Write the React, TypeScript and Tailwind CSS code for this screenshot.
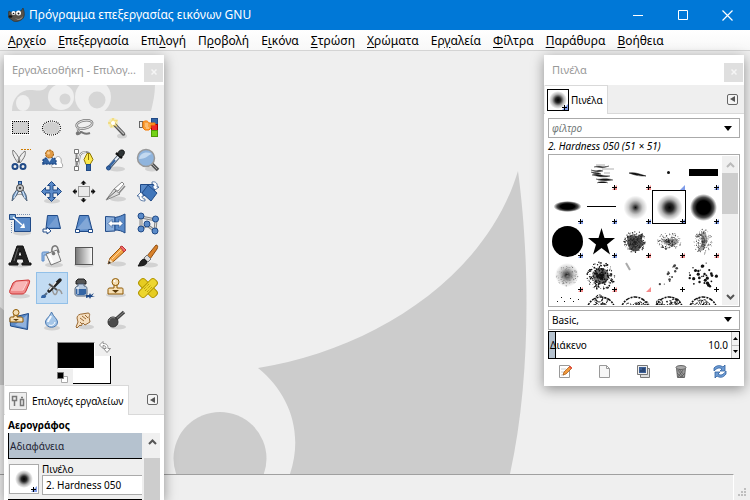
import type { ReactNode } from "react";

const BLUE = "#5b8bc9";
const NAVY = "#204a87";

function Icon({ children, size = 24 }: { children: ReactNode; size?: number }) {
  return (
    <svg width={size} height={size} viewBox={`0 0 ${size} ${size}`} fill="none" aria-hidden="true">
      {children}
    </svg>
  );
}

function Shade({ cx = 12, cy = 20, rx = 10 }: { cx?: number; cy?: number; rx?: number }) {
  return <ellipse cx={cx} cy={cy} rx={rx} ry="2.5" fill="#000" opacity="0.12" />;
}

const tools: { name: string; art: ReactNode }[] = [
  {
    name: "Ορθογώνια επιλογή",
    art: (
      <g shapeRendering="crispEdges">
        <rect x="3" y="4" width="19" height="15" fill="#fff" />
        <rect x="4" y="5" width="17" height="13" fill="#d0d0d0" />
        <path d="M4 5.500h17M4 17.500h17M4.500 5v13M20.500 5v13" stroke="#000" strokeDasharray="1 1" />
      </g>
    ),
  },
  {
    name: "Ελλειπτική επιλογή",
    art: (
      <>
        <ellipse cx="11.500" cy="12" rx="9" ry="7" fill="#d0d0d0" stroke="#fff" strokeWidth="2" />
        <ellipse cx="11.500" cy="12" rx="9" ry="7" stroke="#000" strokeWidth="1.200" strokeDasharray="1 1" />
      </>
    ),
  },
  {
    name: "Ελεύθερη επιλογή",
    art: (
      <>
        <ellipse cx="12.500" cy="8.500" rx="8" ry="4" transform="rotate(-12 12 9)" stroke="#777" strokeWidth="2.500" />
        <ellipse cx="12.500" cy="8.500" rx="8" ry="4" transform="rotate(-12 12 9)" stroke="#ddd" />
        <path d="M6 12c-1 3 1 3 2 4s-2 3-3 2 1-3 4-2 4 3 9 1" stroke="#777" strokeWidth="2" />
        <path d="M6 12c-1 3 1 3 2 4" stroke="#ddd" />
      </>
    ),
  },
  {
    name: "Ασαφής επιλογή",
    art: (
      <>
        <Shade cx={18} rx={5} />
        <circle cx="9" cy="7" r="5" fill="#fce94f" opacity="0.35" />
        <path d="m11 9 8.500 9" stroke="#555" strokeWidth="3.500" strokeLinecap="round" />
        <path d="m12 10 8 8" stroke="#bbb" strokeWidth="1.200" />
        <path d="m9 2 1.300 3 3.200-1-2.500 3 2 3.500-3.500-1.500-2.500 2.500.5-3.500L4 7l3.500-1z" fill="#fff3a8" stroke="#efcb5a" strokeWidth=".6" />
        <circle cx="9" cy="7" r="2" fill="#fff" />
      </>
    ),
  },
  {
    name: "Επιλογή κατά χρώμα",
    art: (
      <>
        <rect x="15.500" y="2.500" width="6" height="6" fill="#3465a4" stroke={NAVY} />
        <rect x="15.500" y="8.500" width="6" height="6" fill="#ef2929" stroke="#a40000" />
        <rect x="15.500" y="14.500" width="6" height="6" fill="#73d216" stroke="#4e9a06" />
        <rect x="3.500" y="5.500" width="3" height="6" fill="#eee" stroke="#666" />
        <path d="M7 6c3-2 5-1 6 1h6v2h-4v3l-2 2H9l-2-2z" fill="#f9a13e" stroke="#f57900" />
        <path d="M9 8h3M9 10h3M10 12h3" stroke="#ffd9a8" />
      </>
    ),
  },
  {
    name: "Έξυπνο ψαλίδι",
    art: (
      <>
        <path d="M13 1.500h10" stroke="#ce7b00" strokeWidth="1.200" strokeDasharray="2 1" />
        <path d="M5 2c-1 3 0 6 5 13l2-3C10 8 8 5 5 2zM17 3c1 3 0 6-5 12l-2-3c2-4 4-7 7-9z" fill="#eee" stroke="#777" />
        <rect x="4.500" y="16" width="5" height="5" rx="2.500" stroke={NAVY} strokeWidth="2" />
        <rect x="12.500" y="16" width="5" height="5" rx="2.500" stroke={NAVY} strokeWidth="2" />
        <circle cx="11" cy="13.500" r="1" fill="#555" />
      </>
    ),
  },
  {
    name: "Επιλογή προσκηνίου",
    art: (
      <>
        <path d="M12 19.500c-1-3 1-5 3-5 0-4 1-6 3-6s4 2 3 6c2 1 2 4 1 5z" fill="#fff" stroke="#aaa" />
        <path d="M3 16v-3c0-2 2-3 4-3h5c3 0 4 2 4 4v2z" fill="#3465a4" stroke={NAVY} strokeWidth="1.500" strokeDasharray="2 1" />
        <path d="m7 10 2.500 4 2.500-4" fill="#dbe7f5" />
        <circle cx="9.500" cy="6" r="4" fill="#e09a45" stroke="#a15e0d" strokeDasharray="2 1" />
        <circle cx="8.500" cy="5" r="1.500" fill="#f6c98d" />
      </>
    ),
  },
  {
    name: "Διαδρομές",
    art: (
      <>
        <path d="M4.500 5v14M5 19c4-4-1-15 9-15 3 0 4 2 4 5" stroke="#888" strokeWidth="2" />
        <path d="M5 19c4-4-1-15 9-15" stroke="#eee" />
        <path d="M2.500 1.500h4v4h-4zM2.500 18.500h4v4h-4zM3.500 10.500h3v3h-3z" fill="#fff" stroke="#777" />
        <path d="M15 5.500h3l3 6-3 5h-4l-2-5z" fill="#fce94f" stroke="#8f7700" />
        <path d="M16.500 6v6" stroke="#8f7700" />
        <rect x="14.500" y="16.500" width="4" height="6" fill="#3465a4" stroke={NAVY} />
      </>
    ),
  },
  {
    name: "Επιλογή χρώματος",
    art: (
      <>
        <Shade cx={13} cy={21} rx={8} />
        <path d="M15 8 5.500 19" stroke="#4a5a6e" strokeWidth="4" strokeLinecap="round" />
        <path d="M15 8 6 18" stroke="#e8f1fa" strokeWidth="2" />
        <path d="m11 12-6 7" stroke="#3465a4" strokeWidth="2" />
        <circle cx="4.500" cy="20" r="2" fill="#3465a4" stroke={NAVY} />
        <path d="m12 5 6 5" stroke="#111" strokeWidth="2.500" />
        <path d="M14 7c0-4 2-5 4-5s3 2 2 4-2 3-4 3z" fill="#2e3436" stroke="#111" />
      </>
    ),
  },
  {
    name: "Εστίαση",
    art: (
      <>
        <Shade cx={16} cy={21} rx={7} />
        <path d="m16 16 6 6" stroke="#555" strokeWidth="3.500" />
        <path d="m16 16 5 5" stroke="#aaa" />
        <circle cx="10" cy="10" r="8.500" fill="#8fb4dd" stroke="#999" strokeWidth="1.500" />
        <path d="M3 11c1-6 7-8 13-5-3 0-5 5-13 5z" fill="#c3d9f0" />
      </>
    ),
  },
  {
    name: "Μέτρηση",
    art: (
      <>
        <path d="M5 18c3-5 11-5 14 0" stroke="#999" />
        <path d="m10 8-5 7-1 6 4-5 4-7zM14 8l4 7 1 6-4-5-3-7z" fill="#729fcf" stroke="#54657a" />
        <path d="m10 9-4 9M14 9l3 9" stroke="#dbe7f5" />
        <rect x="10.500" y="1.500" width="3" height="4" fill="#729fcf" stroke={NAVY} />
        <circle cx="12" cy="8" r="3.500" fill="#ccc" stroke="#444" />
        <circle cx="12" cy="8" r="1.300" fill="#444" />
      </>
    ),
  },
  {
    name: "Μετακίνηση",
    art: (
      <>
        <Shade cx={12} cy={21} rx={8} />
        <path
          d="m11.500 1.500 4 4h-2.500v4.500h4.500V7.500l4 4-4 4V13H13v4.500h2.500l-4 4-4-4H10V13H5.500v2.500l-4-4 4-4V10H10V5.500H7.500z"
          fill={BLUE}
          stroke={NAVY}
        />
      </>
    ),
  },
  {
    name: "Στοίχιση",
    art: (
      <>
        <rect x="6.500" y="6.500" width="11" height="10" fill="#eaeaea" stroke="#999" />
        <path
          d="m11.500 0.500 3 3h-2V5h-2V3.500h-2zM11.500 22.500l3-3h-2V18h-2v1.500h-2zM.5 11.500l3-3v2H5v2H3.500v2zM23.500 11.500l-3-3v2H19v2h1.500v2z"
          fill="#111"
        />
      </>
    ),
  },
  {
    name: "Περικοπή",
    art: (
      <>
        <Shade cx={14} cy={19} rx={8} />
        <path d="M2 20 10 9l6 5z" fill="#ddd" stroke="#888" />
        <path d="m10 9 8-7 2 2-6 7z" fill="#fff" stroke="#888" />
        <path d="m15 13 6-7" stroke="#888" strokeWidth="1.500" />
        <path d="m3 19 9-8" stroke="#666" />
      </>
    ),
  },
  {
    name: "Περιστροφή",
    art: (
      <>
        <path d="M4.500 4.500h14v11h-14z" fill={BLUE} stroke={NAVY} />
        <path d="m12 5 9 8-6 8-9-8z" fill="#4176ba" stroke={NAVY} />
        <path d="M16 2c4-1 6 2 5 5h2l-4 3-3-4h2c0-2-1-2-2-2zM9 21c-5 0-6-2-6-5H1l4-4 3 4H6c0 2 1 3 3 3z" fill="#fff" stroke={NAVY} strokeWidth=".7" />
      </>
    ),
  },
  {
    name: "Κλιμάκωση",
    art: (
      <>
        <Shade cx={14} cy={21} rx={9} />
        <path d="M6.500 5.500h16v14h-16z" fill={BLUE} stroke={NAVY} />
        <path d="M1.500 2.500h6v5h-6z" fill="#729fcf" stroke={NAVY} />
        <path d="M9 2.500h13M3.500 10v11" stroke="#7c93b3" strokeDasharray="1 1" />
        <path d="m5 5 9 8" stroke="#fff" strokeWidth="1.500" />
        <path d="M17 16h-5l4-5z" fill="#fff" />
      </>
    ),
  },
  {
    name: "Στρέβλωση",
    art: (
      <>
        <path d="M7.500 3.500h10l3 13H6z" fill={BLUE} stroke={NAVY} />
        <path d="m8 15 9-11 2 11z" fill="#8fb0dc" opacity=".5" />
        <path d="M3 17h4v-2l4 4-4 3v-2H3z" fill="#fff" stroke={NAVY} />
      </>
    ),
  },
  {
    name: "Προοπτική",
    art: (
      <>
        <path d="M7.500 3.500h9l4 16h-17z" fill={BLUE} stroke={NAVY} />
        <path d="m4 18 11-13 4 12z" fill="#a9c3e6" opacity=".5" />
        <path d="M3.500 17.500h4v3h-4zM16.500 17.500h4v3h-4z" fill="#fff" stroke={NAVY} />
      </>
    ),
  },
  {
    name: "Αναστροφή",
    art: (
      <>
        <path d="M1.500 4.500 11 5v14l-9.500.5z" fill="#8db0dc" stroke={NAVY} />
        <path d="M11 5.500c5-1 7-2 10-3.500v19c-3-2-6-3-10-3z" fill={BLUE} stroke={NAVY} />
        <path d="m4 11.500 4-4v2.500h7V7.500l4 4-4 4V13H8v2.500z" fill="#fff" stroke={NAVY} strokeWidth=".6" />
      </>
    ),
  },
  {
    name: "Κλωβός",
    art: (
      <>
        <path d="m5 5 15 3-1 11-8-6-6 4z" stroke="#888" strokeWidth="3" />
        <path d="m5 5 15 3-1 11-8-6-6 4z" stroke="#ddd" />
        {[[5, 4], [19.5, 7], [11, 12], [5, 17], [19, 19]].map(([x, y]) => (
          <circle key={`${x}-${y}`} cx={x} cy={y} r="3" fill={BLUE} stroke={NAVY} />
        ))}
      </>
    ),
  },
  {
    name: "Κείμενο",
    art: (
      <>
        <Shade cy={21} />
        <path
          d="M9 2h6l6 17h2v2h-9v-2h2l-1-4H9l-1 4h2v2H1v-2h2zM12 6l-2 6h4z"
          fill="#222"
          fillRule="evenodd"
          stroke="#111"
        />
        <path d="m10 4-4 13" stroke="#666" />
      </>
    ),
  },
  {
    name: "Γέμισμα με κουβά",
    art: (
      <>
        <Shade cx={14} cy={21} rx={9} />
        <path d="M2 17V9c0-1 1-1 3-1h4v3H4v6z" fill="#9bbce3" stroke={BLUE} />
        <path d="m6 10 11-4 4 11-10 4z" fill="#f3f3f3" stroke="#777" />
        <path d="M12 8c-1-7 5-8 6-3l1 4" stroke="#777" strokeWidth="1.500" />
        <circle cx="13.500" cy="9.500" r="1.800" fill="#777" />
        <path d="m9 11 4 8" stroke="#fff" strokeWidth="2" />
      </>
    ),
  },
  {
    name: "Διαβάθμιση",
    art: (
      <>
        <defs>
          <linearGradient id="tool-gradient">
            <stop stopColor="#777" />
            <stop offset="1" stopColor="#fff" />
          </linearGradient>
        </defs>
        <Shade cy={21} />
        <rect x="3.500" y="3.500" width="17" height="17" fill="url(#tool-gradient)" stroke="#555" />
      </>
    ),
  },
  {
    name: "Μολύβι",
    art: (
      <>
        <Shade cx={14} cy={20} rx={8} />
        <path d="m4 20 2-6L17 3l4 4L10 17z" fill="#f0a346" stroke="#99540c" />
        <path d="m8 15 10-10" stroke="#ffd79b" />
        <path d="m16 3 2-1 4 4-2 2z" fill="#ef6b6b" stroke="#b33" />
        <path d="m4 20 2-5 3 3z" fill="#f7e1bd" />
        <path d="m4 20 1-3 2 2z" fill="#222" />
      </>
    ),
  },
  {
    name: "Πινέλο",
    art: (
      <>
        <Shade cx={14} cy={21} rx={8} />
        <path d="M20 1c2 0 2 2 1 4l-7 10-3-3z" fill="#d9822b" stroke="#8f4e12" />
        <path d="m11 11 4 4-3 3-4-4z" fill="#ddd" stroke="#777" />
        <path d="M2 22c2-2 2-6 6-7l3 3c-1 4-6 4-9 4z" fill="#222" stroke="#111" />
      </>
    ),
  },
  {
    name: "Γόμα",
    art: (
      <>
        <Shade cy={20} />
        <path d="m8 5 12-1c2 0 2 1 1 4l-3 7c-1 2-2 3-4 3H4c-2 0-3-2-2-4l3-7z" fill="#f08b8b" stroke="#c33" />
        <path d="m8 6 11-1-4 8H4z" fill="#f8b5b5" />
        <path d="M3 14h12l4-8" stroke="#fdd" />
      </>
    ),
  },
  {
    name: "Αερογράφος",
    art: (
      <>
        <path d="M12 11c1 9 4 9 5 5s4-2 5 2" stroke="#999" strokeWidth="1.500" />
        <path d="m20 4-11 11" stroke="#222" strokeWidth="3.500" strokeLinecap="round" />
        <path d="m16 6-7 8" stroke="#eee" strokeWidth="1.500" />
        <path d="m9 8 8 6" stroke="#555" strokeWidth="2" />
        <path d="m7 17-3 3" stroke="#5c6f84" strokeWidth="2" />
        <path d="M1 22c0-3 2-4 4-3s1 2 0 3z" fill="#3465a4" />
      </>
    ),
  },
  {
    name: "Μελάνι",
    art: (
      <>
        <path d="M6 3h6l2 2v3H4V5z" fill="#555" stroke="#222" />
        <path d="M6 8h6v2c3 0 3 2 3 4v4c0 1-1 2-2 2H5c-1 0-2-1-2-2v-5c0-1 1-3 3-3z" fill="#b9cbe0" stroke="#54657a" />
        <path d="M4 13h10v5l-2 1H6l-2-1z" fill="#3465a4" />
        <path d="M6 11v7" stroke="#fff" />
        <path d="m14 19 3 0 1-2 1 2 3-2-2 3 3 1-4 0-1 2-1-2-3 1z" fill={NAVY} />
      </>
    ),
  },
  {
    name: "Κλωνοποίηση",
    art: (
      <>
        <Shade cy={19} />
        <path d="M10 9h3v3h5c1 0 1 1 1 2v4H4v-4c0-1 0-2 2-2h4z" fill="#f6dfb5" stroke="#8f5902" />
        <circle cx="11.500" cy="6" r="3.500" fill="#f6dfb5" stroke="#8f5902" />
        <path d="m8 14 3.500 3 3.500-3z" fill="#5c3b08" />
        <circle cx="10.500" cy="5" r="1" fill="#fff" />
      </>
    ),
  },
  {
    name: "Θεραπεία",
    art: (
      <>
        <g stroke="#b39700">
          <rect x="1" y="8" width="22" height="8" rx="3" transform="rotate(45 12 12)" fill="#e6cc22" />
          <rect x="1" y="8" width="22" height="8" rx="3" transform="rotate(-45 12 12)" fill="#edd62f" />
        </g>
        <path d="m8 13 5-5M9 15l6-6M11 16l5-5" stroke="#a98d00" strokeDasharray="1 1" />
      </>
    ),
  },
  {
    name: "Κλωνοποίηση προοπτικής",
    art: (
      <>
        <path d="M2 10 20.500 5.500l-1 16L2.500 18z" fill={BLUE} stroke={NAVY} />
        <path d="m7 17 12-10-1 13z" fill="#a9c3e6" opacity=".7" />
        <path d="M6 6h3v3h4c1 0 2 1 2 2v3H2v-3c0-1 0-2 1-2h3z" fill="#f6dfb5" stroke="#8f5902" />
        <circle cx="8" cy="4.500" r="3" fill="#f6dfb5" stroke="#8f5902" />
        <path d="m5 11 3 2 3-2z" fill="#5c3b08" />
      </>
    ),
  },
  {
    name: "Θόλωση",
    art: (
      <>
        <Shade cy={20} rx={8} />
        <path d="M11.500 4c2 5 6 7 6 10 0 7-12 7-12 0 0-3 4-5 6-10z" fill="#a5c6e8" stroke="#4a78b0" />
        <path d="M11 8c-1 3-3 4-3 6" stroke="#f4f9ff" strokeWidth="2" />
        <path d="M9 17c3 1 5 0 6-3" stroke="#fff" />
      </>
    ),
  },
  {
    name: "Μουτζούρα",
    art: (
      <>
        <Shade cx={14} cy={19} rx={8} />
        <path d="M5 10c0-3 3-4 5-4l6-1c2 0 2 2 1 4l1 5-5 3-2-2-2 3-1-1-3 3-1-1 2-5z" fill="#f6dfc0" stroke="#9a6a35" />
        <path d="m8 10 4 3M10 8l4 3M8 14l2 2M13 7l3 3" stroke="#9a6a35" />
      </>
    ),
  },
  {
    name: "Σκίαση / Φωτισμός",
    art: (
      <>
        <Shade cx={14} cy={19} rx={8} />
        <path d="m11 12 9-8" stroke="#444" strokeWidth="3.500" />
        <path d="m11 12 9-8" stroke="#888" />
        <circle cx="9" cy="14" r="5" fill="#4a4a4a" stroke="#333" />
        <path d="M5 13c1-3 3-4 6-3" stroke="#888" />
      </>
    ),
  },
];

// Deterministic spatter so that the brush previews look the same on every render.
function spatter(seed: number, count: number, spread: number, size: number) {
  let s = seed * 7919 + 17;
  const next = () => {
    s = (s * 16807) % 2147483647;
    return s / 2147483647;
  };
  for (let i = 0; i < 5; i++) next();
  return Array.from({ length: count }, () => {
    const a = next() * Math.PI * 2;
    const r = Math.pow(next(), 0.8) * spread;
    return { x: 17 + Math.cos(a) * r, y: 18 + Math.sin(a) * r, r: size * (0.5 + next()) };
  });
}

function Spatter(p: { seed: number; count: number; spread: number; size: number; color?: string }) {
  return (
    <>
      {spatter(p.seed, p.count, p.spread, p.size).map((d, i) => (
        <circle key={i} cx={d.x} cy={d.y} r={d.r} fill={p.color ?? "#111"} />
      ))}
    </>
  );
}

function Cells({ seed }: { seed: number }) {
  return (
    <>
      {spatter(seed, 26, 14, 2.4).map((d, i) => (
        <circle key={i} cx={d.x} cy={d.y + 1} r={d.r} stroke="#111" strokeDasharray="3 1" />
      ))}
      <circle cx="17" cy="19" r="14" stroke="#111" strokeWidth="1.500" strokeDasharray="4 1 2 1" />
    </>
  );
}

type Mark = "red" | "blue" | "plain" | "redTri" | "blueTri" | "none";

const brushes: { name: string; mark: Mark; art: ReactNode }[] = [
  { name: "Clipboard", mark: "none", art: null },
  {
    name: "Acrylic 01",
    mark: "red",
    art: (
      <path
        d="M10 11c6-2 8 1 15-1-7 3-9 1-15 1zM7 14c6 2 8-1 12 1-5 1-8 1-12-1zM8 19c5-2 9 1 18 1-8 2-12 0-18-1zM12 23c4 1 8-2 17 1-7 1-12 1-17-1zM7 16c5 1 7 0 10 2-4 0-7 0-10-2zM13 27c5-2 8-1 11 0M12 9h9M18 13h12M20 17h6M14 25h9"
        fill="#111"
        stroke="#333"
        strokeWidth=".4"
      />
    ),
  },
  { name: "Acrylic 02", mark: "red", art: <path d="M11 17c6-1 10 1 17 3-5 0-9 0-17-3z" fill="#111" stroke="#111" strokeWidth=".5" /> },
  { name: "Pixel", mark: "blueTri", art: <circle cx="16.500" cy="16.500" r="1.500" fill="#111" /> },
  { name: "Block 01", mark: "blue", art: <rect x="3" y="13" width="29" height="7" fill="#000" /> },
  { name: "Ellipse", mark: "blue", art: <ellipse cx="17.500" cy="16.500" rx="14" ry="5.500" fill="url(#brush-hard)" /> },
  { name: "Line", mark: "blue", art: <path d="M3 16.500h29" stroke="#000" /> },
  { name: "Hardness 025", mark: "blue", art: <circle cx="17.500" cy="17.500" r="12" fill="url(#brush-soft)" /> },
  { name: "Hardness 050", mark: "blue", art: <circle cx="17.500" cy="17.500" r="13" fill="url(#brush-mid)" /> },
  { name: "Hardness 075", mark: "blue", art: <circle cx="17.500" cy="17.500" r="13.500" fill="url(#brush-hard)" /> },
  { name: "Hardness 100", mark: "blue", art: <circle cx="17.500" cy="17.500" r="15.500" fill="#000" /> },
  { name: "Star", mark: "blue", art: <path d="m17.500 4 3 10H31l-8 6.500 3 10-8.500-6.500L9 30.500l3-10L4 14h10.500z" fill="#000" /> },
  {
    name: "Chalk 01",
    mark: "red",
    art: (
      <>
        <path d="m9 12 5-1 5 1 6-3-1 6 2 5-5 6-7 1-4-5z" fill="#222" opacity=".75" />
        <Spatter seed={3} count={240} spread={11} size={0.5} color="#222" />
      </>
    ),
  },
  {
    name: "Chalk 02",
    mark: "red",
    art: (
      <g transform="translate(0 4) scale(1 .75)">
        <path d="m9 14 7 2 8-2 3 5-6 6-7-3z" fill="#333" opacity=".5" />
        <Spatter seed={4} count={150} spread={12} size={0.5} color="#222" />
      </g>
    ),
  },
  {
    name: "Chalk 03",
    mark: "red",
    art: (
      <g transform="translate(5 0) scale(.7 1)">
        <path d="m14 9 7-1 3 9-6 9-8 2 5-9z" fill="#444" opacity=".5" />
        <Spatter seed={11} count={170} spread={13} size={0.5} color="#333" />
      </g>
    ),
  },
  {
    name: "Charcoal",
    mark: "red",
    art: (
      <>
        <circle cx="17" cy="17" r="12" fill="url(#brush-soft)" />
        <Spatter seed={5} count={130} spread={11} size={0.4} color="#777" />
      </>
    ),
  },
  {
    name: "Sponge",
    mark: "red",
    art: (
      <>
        <circle cx="17" cy="18" r="8" fill="#111" opacity=".6" />
        <Spatter seed={6} count={260} spread={14} size={0.6} />
      </>
    ),
  },
  { name: "Pencil Scratch", mark: "redTri", art: <path d="m8 5 4 7" stroke="#aaa" strokeWidth="2" /> },
  { name: "Sparks", mark: "plain", art: <Spatter seed={8} count={14} spread={15} size={0.9} color="#444" /> },
  { name: "Splats", mark: "plain", art: <Spatter seed={9} count={32} spread={14} size={1.1} /> },
  { name: "Texture 01", mark: "none", art: <path d="M7 9.500h1M14 9.500h1M23 9.500h1M11 5.500h1M20 6.500h1M28 7.500h1M9 14.500h1" stroke="#111" /> },
  { name: "Texture 02", mark: "none", art: <Cells seed={12} /> },
  { name: "Texture 03", mark: "none", art: <Cells seed={13} /> },
  { name: "Texture 04", mark: "none", art: <><Cells seed={14} /><Spatter seed={15} count={90} spread={13} size={0.6} /></> },
  { name: "Texture 05", mark: "none", art: <Cells seed={16} /> },
];

function BrushMark({ mark }: { mark: Mark }) {
  if (mark === "none") return null;
  if (mark === "plain") return <path d="M28 31.500h5M30.500 29v5" stroke="#000" />;
  const tint = mark === "red" || mark === "redTri" ? "#f48a8a" : "#7f9be8";
  return (
    <>
      <path d="M33 29v5h-5z" fill={tint} />
      {(mark === "red" || mark === "blue") && <path d="M28 31.500h5M30.500 29v5" stroke="#000" />}
    </>
  );
}

function Brush({ art, mark }: { art: ReactNode; mark: Mark }) {
  return (
    <svg viewBox="0 0 34 34" className="size-[34px] shrink-0" fill="none" aria-hidden="true">
      {art}
      <BrushMark mark={mark} />
    </svg>
  );
}

function SmallBrush({ size = 20 }: { size?: number }) {
  return (
    <svg width={size} height={size} viewBox={`0 0 ${size} ${size}`} fill="none" aria-hidden="true">
      <circle cx={size / 2} cy={size / 2} r="9" fill="url(#brush-mid)" />
      <g transform={`translate(${size - 20} ${size - 20})`}>
        <path d="M20 14v6h-6z" fill="#7f9be8" />
        <path d="M14 17.500h5M16.500 15v5" stroke="#000" />
      </g>
    </svg>
  );
}

function BrushGradients() {
  return (
    <svg width="0" height="0" className="absolute" aria-hidden="true">
      <defs>
        <radialGradient id="brush-soft">
          <stop stopColor="#000" stopOpacity=".95" />
          <stop offset=".3" stopColor="#000" stopOpacity=".5" />
          <stop offset=".6" stopColor="#000" stopOpacity=".2" />
          <stop offset="1" stopColor="#000" stopOpacity="0" />
        </radialGradient>
        <radialGradient id="brush-mid">
          <stop stopColor="#000" />
          <stop offset=".3" stopColor="#000" stopOpacity=".85" />
          <stop offset=".65" stopColor="#000" stopOpacity=".3" />
          <stop offset="1" stopColor="#000" stopOpacity="0" />
        </radialGradient>
        <radialGradient id="brush-hard">
          <stop offset=".5" stopColor="#000" />
          <stop offset=".75" stopColor="#000" stopOpacity=".7" />
          <stop offset="1" stopColor="#000" stopOpacity="0" />
        </radialGradient>
      </defs>
    </svg>
  );
}

const menus: [string, string, string][] = [
  ["", "Α", "ρχείο"],
  ["", "Ε", "πεξεργασία"],
  ["Επι", "λ", "ογή"],
  ["Π", "ρ", "οβολή"],
  ["Ε", "ι", "κόνα"],
  ["", "Σ", "τρώση"],
  ["", "Χ", "ρώματα"],
  ["Ερ", "γ", "αλεία"],
  ["", "Φ", "ίλτρα"],
  ["", "Π", "αράθυρα"],
  ["", "Β", "οήθεια"],
];

function Wilber() {
  return (
    <svg width="18" height="18" viewBox="0 0 18 18" aria-hidden="true">
      <path d="M1 5c2 2 4 1 5 1l7-1 2-3c2 5 2 10-2 12-4 2-7 2-9 0l-3-2C0 11 0 7 1 5z" fill="#57524a" stroke="#33302b" strokeWidth=".7" />
      <path d="M7 12c3 2 6 1 8-2-1 4-5 5-8 2z" fill="#a7a197" />
      <circle cx="5.500" cy="7" r="2" fill="#fff" />
      <circle cx="10.500" cy="7" r="2.500" fill="#fff" />
      <circle cx="5.500" cy="7.500" r=".8" fill="#111" />
      <circle cx="10.500" cy="7.500" r="1" fill="#111" />
      <ellipse cx="2.500" cy="10.500" rx="1.800" ry="1.300" fill="#111" />
    </svg>
  );
}

function TitleBar() {
  return (
    <header className="flex h-[30px] shrink-0 items-center bg-[#0078d7] pl-2 text-white">
      <Wilber />
      <h1 className="ml-[3px] flex-1 text-[12px] leading-4">Πρόγραμμα επεξεργασίας εικόνων GNU</h1>
      <button aria-label="Ελαχιστοποίηση" className="grid h-7 w-[45px] place-items-center">
        <svg width="10" height="10" stroke="#fff"><path d="M0 5.500h10" /></svg>
      </button>
      <button aria-label="Μεγιστοποίηση" className="grid h-7 w-[45px] place-items-center">
        <svg width="10" height="10" fill="none" stroke="#fff"><path d="M.5.500h9v9h-9z" /></svg>
      </button>
      <button aria-label="Κλείσιμο" className="grid h-7 w-[45px] place-items-center">
        <svg width="11" height="11" stroke="#fff" strokeWidth="1.200"><path d="m.5.500 10 10M10.500.500l-10 10" /></svg>
      </button>
    </header>
  );
}

function MenuBar() {
  return (
    <nav className="flex h-[21px] shrink-0 items-center gap-3 border-b border-[#d4d4d4] bg-gradient-to-b from-white to-[#f8f8f8] pt-px pl-2">
      {menus.map(([pre, key, post]) => (
        <button key={pre + key + post} className="whitespace-nowrap text-[12px] leading-4">
          {pre}
          <span className="underline underline-offset-2">{key}</span>
          {post}
        </button>
      ))}
    </nav>
  );
}

function Canvas() {
  return (
    <main className="min-h-0 flex-1 overflow-hidden">
      <svg width="750" height="423" viewBox="0 51 750 423" fill="#ccc" aria-hidden="true">
        <path d="M518 171C485 280 370 350 258 368c31 25 46 64 32 106h220c21-94 20-214 8-303z" />
        <circle cx="220" cy="458.500" r="46.500" />
        <path d="M0 307c10 8 15 15 20 23v55H0z" />
      </svg>
    </main>
  );
}

function StatusBar() {
  return (
    <footer className="flex h-[26px] shrink-0">
      <div className="flex-1 border-t border-r border-t-[#a0a0a0] border-r-white" />
      <div className="flex w-4 items-end justify-center pb-1">
        <svg width="8" height="8" fill="#bfbfbf" aria-hidden="true">
          <path d="M0 6h2v2H0zM3 6h2v2H3zM6 6h2v2H6zM3 3h2v2H3zM6 3h2v2H6zM6 0h2v2H6z" />
        </svg>
      </div>
    </footer>
  );
}

function DialogHeader({ title }: { title: string }) {
  return (
    <div className="flex h-[30px] shrink-0 items-center bg-white pr-px pl-2">
      <h2 className="flex-1 text-[11px] leading-4 whitespace-nowrap text-[#999]">{title}</h2>
      <button aria-label="Κλείσιμο" className="mt-1 grid size-[19px] shrink-0 place-items-center bg-[#dfdfdf]">
        <svg width="6" height="6" stroke="#f5f5f5" strokeWidth="1.500"><path d="m.5.500 5 5M5.500.500l-5 5" /></svg>
      </button>
    </div>
  );
}

function TabMenuButton() {
  return (
    <button aria-label="Μενού καρτέλας" className="grid size-[11px] place-items-center rounded-xs border border-[#666] bg-[#f4f4f4]">
      <svg width="5" height="6" fill="#555"><path d="M5 0v6L0 3z" /></svg>
    </button>
  );
}

function Chevron({ up = false, color = "#555" }: { up?: boolean; color?: string }) {
  return (
    <svg width="9" height="6" fill="none" stroke={color} strokeWidth="2" aria-hidden="true">
      <path d={up ? "m1 5 3.500-3.500L8 5" : "m1 1 3.500 3.500L8 1"} />
    </svg>
  );
}

function DownTriangle() {
  return (
    <svg width="8" height="5" className="block" aria-hidden="true"><path d="M0 0h8L4 5z" /></svg>
  );
}

function ColorArea() {
  return (
    <div className="relative mx-auto h-[46px] w-[55px]">
      <button aria-label="Χρώμα παρασκηνίου" className="absolute top-[17px] left-4 h-[28px] w-[38px] border-r border-b border-black bg-white" />
      <button aria-label="Χρώμα προσκηνίου" className="absolute top-[3px] left-0 h-[27px] w-[38px] border border-r-white border-b-white border-[#888] bg-black" />
      <button aria-label="Εναλλαγή χρωμάτων" className="absolute top-[2px] left-[42px]">
        <svg width="12" height="13" viewBox="0 0 12 13" fill="#fff" stroke="#888" strokeWidth=".9">
          <path d="M.5 4 4 .5v2c4 0 5 2 5 5h2.500l-3.500 4-3.500-4H7c0-2-1-3-3-3v3z" />
        </svg>
      </button>
      <button aria-label="Προεπιλεγμένα χρώματα" className="absolute top-[33px] left-0">
        <svg width="12" height="12"><path d="M4.500 4.500h6v6h-6z" fill="#fff" stroke="#aaa" /><path d="M.5.500h6v6h-6z" stroke="#777" /></svg>
      </button>
    </div>
  );
}

function Toolbox() {
  return (
    <section className="absolute top-[55px] bottom-0 left-1 flex w-40 flex-col overflow-hidden bg-[#efefef]">
      <DialogHeader title="Εργαλειοθήκη - Επιλογ..." />
      <svg width="160" height="27" viewBox="0 0 160 27" className="shrink-0" aria-hidden="true">
        <path d="M8 26c0-13 8-21 18-21 8 0 13 3 18-5h107c0 9-2 18-4 26z" fill="#d6d6d6" />
        <g fill="#efefef">
          <ellipse cx="19" cy="18" rx="7" ry="8" />
          <circle cx="57" cy="12" r="13" />
          <circle cx="89" cy="12" r="18" />
        </g>
        <circle cx="61" cy="14" r="5.500" fill="#d6d6d6" />
        <circle cx="93" cy="15" r="8.500" fill="#d6d6d6" />
      </svg>
      <div className="grid shrink-0 grid-cols-5">
        {tools.map((t) => (
          <button
            key={t.name}
            aria-label={t.name}
            className={
              t.name === "Αερογράφος"
                ? "grid size-8 place-items-center border border-[#92c0e8] bg-[#c3dcf3]"
                : "grid size-8 place-items-center"
            }
          >
            <Icon>{t.art}</Icon>
          </button>
        ))}
      </div>
      <div className="mt-[3px] shrink-0">
        <ColorArea />
      </div>
      <div className="flex h-[30px] shrink-0 border-b border-[#d9d9d9] pl-px">
        <div role="tab" className="-mb-px flex w-[124px] items-center gap-[5px] border-t border-r border-[#d9d9d9] bg-white pl-1">
          <svg width="18" height="18" fill="none" aria-hidden="true" className="shrink-0">
            <path d="M.5.500h17v17H.500z" fill="#eee" stroke="#aaa" />
            <path d="M3.500 4.500h4v4h-4zM5.500 9v5M12 5.500h2M11.500 7.500h3v6h-3z" stroke="#777" strokeWidth="1.500" />
          </svg>
          <span className="whitespace-nowrap text-[10px] leading-4">Επιλογές εργαλείων</span>
        </div>
        <div className="flex flex-1 items-center justify-end pr-[6px]"><TabMenuButton /></div>
      </div>
      <div className="flex min-h-0 flex-1 flex-col bg-white pr-1 pl-1">
        <h3 className="h-[18px] shrink-0 pt-[2px] text-[10px] leading-4 font-bold">Αερογράφος</h3>
        <div className="flex min-h-0 flex-1 bg-[#efefef]">
          <div className="flex min-w-0 flex-1 flex-col">
            <div className="flex h-[26px] shrink-0 items-center border-b border-l border-black bg-[#b5c2cf] pl-px text-[10px] leading-4 text-[#223]">
              Αδιαφάνεια
            </div>
            <div className="mt-[5px] flex shrink-0 gap-[3px] pl-px">
              <button aria-label="Επιλογή πινέλου" className="grid size-[30px] shrink-0 place-items-center border border-[#aaa] bg-white">
                <SmallBrush size={26} />
              </button>
              <div className="flex min-w-0 flex-1 flex-col">
                <label htmlFor="brush-name" className="text-[10px] leading-[11px]">Πινέλο</label>
                <input
                  id="brush-name"
                  defaultValue="2. Hardness 050"
                  className="h-5 w-full border border-r-0 border-[#aaa] bg-white pl-[3px] text-[10px]"
                />
              </div>
            </div>
            <div className="mt-1 h-4 shrink-0 border border-black bg-[#b5c2cf]" />
          </div>
          <div className="ml-[2px] flex w-4 flex-col bg-[#f0f0f0]">
            <button aria-label="Κύλιση επάνω" className="grid h-[25px] place-items-center pb-[7px]"><Chevron up /></button>
            <div className="flex-1 bg-[#cdcdcd]" />
          </div>
        </div>
      </div>
    </section>
  );
}

const actions: { name: string; art: ReactNode }[] = [
  {
    name: "Επεξεργασία πινέλου",
    art: (
      <>
        <path d="M1.500 1.500h10v12h-10z" fill="#fff" stroke="#999" />
        <path d="M3 5h5M3 8h4M3 11h3" stroke="#ccc" />
        <path d="m5 11 1-3 6-6 2 2-6 6z" fill="#f39a3c" stroke="#a15310" strokeWidth=".7" />
        <path d="m11 3 1-1 2 2-1 1z" fill="#e44" />
      </>
    ),
  },
  { name: "Νέο πινέλο", art: <path d="M2.500 1.500h7l3 3v9h-10zM9.500 1.500v3h3" fill="#f6f6f6" stroke="#999" /> },
  {
    name: "Διπλασιασμός πινέλου",
    art: (
      <>
        <path d="M4.500 4.500h9v9h-9z" fill="#ddd" stroke="#777" />
        <path d="M1.500 1.500h10v9h-10z" fill="#eee" stroke="#777" />
        <path d="M3 3h7v6H3z" fill="#3c5f96" />
        <path d="M4 7h5M6 5h3" stroke="#182e50" />
      </>
    ),
  },
  {
    name: "Διαγραφή πινέλου",
    art: (
      <>
        <path d="M2.500 3.500h9l-1 10h-7z" fill="#999" stroke="#666" />
        <ellipse cx="7" cy="3.500" rx="5" ry="2" fill="#aaa" stroke="#666" />
        <path d="m4 6 5 7M9 6l-5 7M3 9l4 4M11 9l-4 4M5 5l5 6" stroke="#555" strokeWidth=".7" />
      </>
    ),
  },
  {
    name: "Ανανέωση πινέλων",
    art: (
      <>
        <path d="M1 7V4c3-3 6-3 9-1l2-2v6H7l2-2C6 3 4 4 1 7z" fill="#6d9bd3" stroke="#2e5f9f" strokeWidth=".8" />
        <path d="M13 7v3c-3 4-6 4-9 2l-2 2V8h5l-2 2c3 2 5 1 8-3z" fill="#6d9bd3" stroke="#2e5f9f" strokeWidth=".8" />
      </>
    ),
  },
];

function BrushesDialog() {
  return (
    <section className="absolute top-[55px] right-[6px] w-[200px] bg-white pb-1 shadow-[0_3px_12px_rgba(0,0,0,0.4)]">
      <DialogHeader title="Πινέλα" />
      <div className="flex h-[29px] border-b border-[#d9d9d9] bg-[#efefef] pl-px">
        <div role="tab" className="-mb-px flex w-[63px] items-center gap-[2px] border-t border-r border-[#d9d9d9] bg-white pl-[2px]">
          <span className="grid size-[22px] shrink-0 place-items-center border border-black"><SmallBrush /></span>
          <span className="text-[10px] leading-4">Πινέλα</span>
        </div>
        <div className="flex flex-1 items-center justify-end pr-[6px]"><TabMenuButton /></div>
      </div>
      <div className="flex flex-col px-1 pt-1">
        <div className="flex h-5 items-center border border-[#aaa] pr-[7px]">
          <input aria-label="Φίλτρο πινέλων" placeholder="φίλτρο" className="min-w-0 flex-1 pl-[3px] text-[10px] italic outline-none placeholder:text-[#6f7776]" />
          <button aria-label="Επιλογή φίλτρου"><DownTriangle /></button>
        </div>
        <p className="h-4 text-[10px] leading-4 italic">2. Hardness 050 (51 × 51)</p>
        <div className="flex h-[153px] border border-[#aaa] p-px">
          <div className="grid flex-1 grid-cols-[repeat(5,34px)] content-start overflow-hidden">
            {brushes.map((b) => (
              <button
                key={b.name}
                aria-label={b.name}
                className={b.name === "Hardness 050" ? "size-[34px] outline outline-1 -outline-offset-1 outline-black" : "size-[34px]"}
              >
                <Brush art={b.art} mark={b.mark} />
              </button>
            ))}
          </div>
          <div className="flex w-4 flex-col bg-[#f0f0f0]">
            <button aria-label="Κύλιση επάνω" className="grid h-[17px] place-items-center"><Chevron up color="#bbb" /></button>
            <div className="h-[41px] bg-[#cdcdcd]" />
            <button aria-label="Κύλιση κάτω" className="mt-auto grid h-[17px] place-items-center"><Chevron /></button>
          </div>
        </div>
        <div className="relative mt-[3px] h-5">
          <select aria-label="Ετικέτες" className="block h-5 w-full appearance-none border border-[#aaa] bg-white pl-[3px] text-[10px] leading-4">
            <option>Basic,</option>
          </select>
          <span className="pointer-events-none absolute top-[7px] right-2"><DownTriangle /></span>
        </div>
        <div className="mt-px flex h-7 items-stretch border border-black">
          <label htmlFor="spacing" className="flex w-[60px] items-center bg-[linear-gradient(90deg,#b5c2cf_6px,#000_6px,#000_7px,transparent_7px)] pl-px text-[10px]">
            Διάκενο
          </label>
          <input id="spacing" defaultValue="10.0" className="min-w-0 flex-1 pr-[3px] text-right text-[10px] outline-none" />
          <div className="flex w-2 flex-col border-l border-[#bbb] bg-[#f0f0f0]">
            <button aria-label="Αύξηση" className="grid flex-1 place-items-center border-b border-[#bbb]">
              <svg width="5" height="3"><path d="M0 3h5L2.500 0z" /></svg>
            </button>
            <button aria-label="Μείωση" className="grid flex-1 place-items-center">
              <svg width="5" height="3"><path d="M0 0h5L2.500 3z" /></svg>
            </button>
          </div>
        </div>
        <div className="flex h-[23px] items-center justify-between pt-px pr-[13px] pl-[10px]">
          {actions.map((a) => (
            <button key={a.name} aria-label={a.name}><Icon size={14}>{a.art}</Icon></button>
          ))}
        </div>
      </div>
    </section>
  );
}

export default function App() {
  return (
    <div className="relative flex h-screen flex-col overflow-hidden bg-[#efefef] font-['Noto_Sans','Open_Sans',sans-serif] text-black">
      <BrushGradients />
      <TitleBar />
      <MenuBar />
      <Canvas />
      <StatusBar />
      <div className="absolute top-[55px] bottom-0 left-1 w-40 shadow-[0_3px_12px_rgba(0,0,0,0.4)]" />
      <Toolbox />
      <BrushesDialog />
    </div>
  );
}
